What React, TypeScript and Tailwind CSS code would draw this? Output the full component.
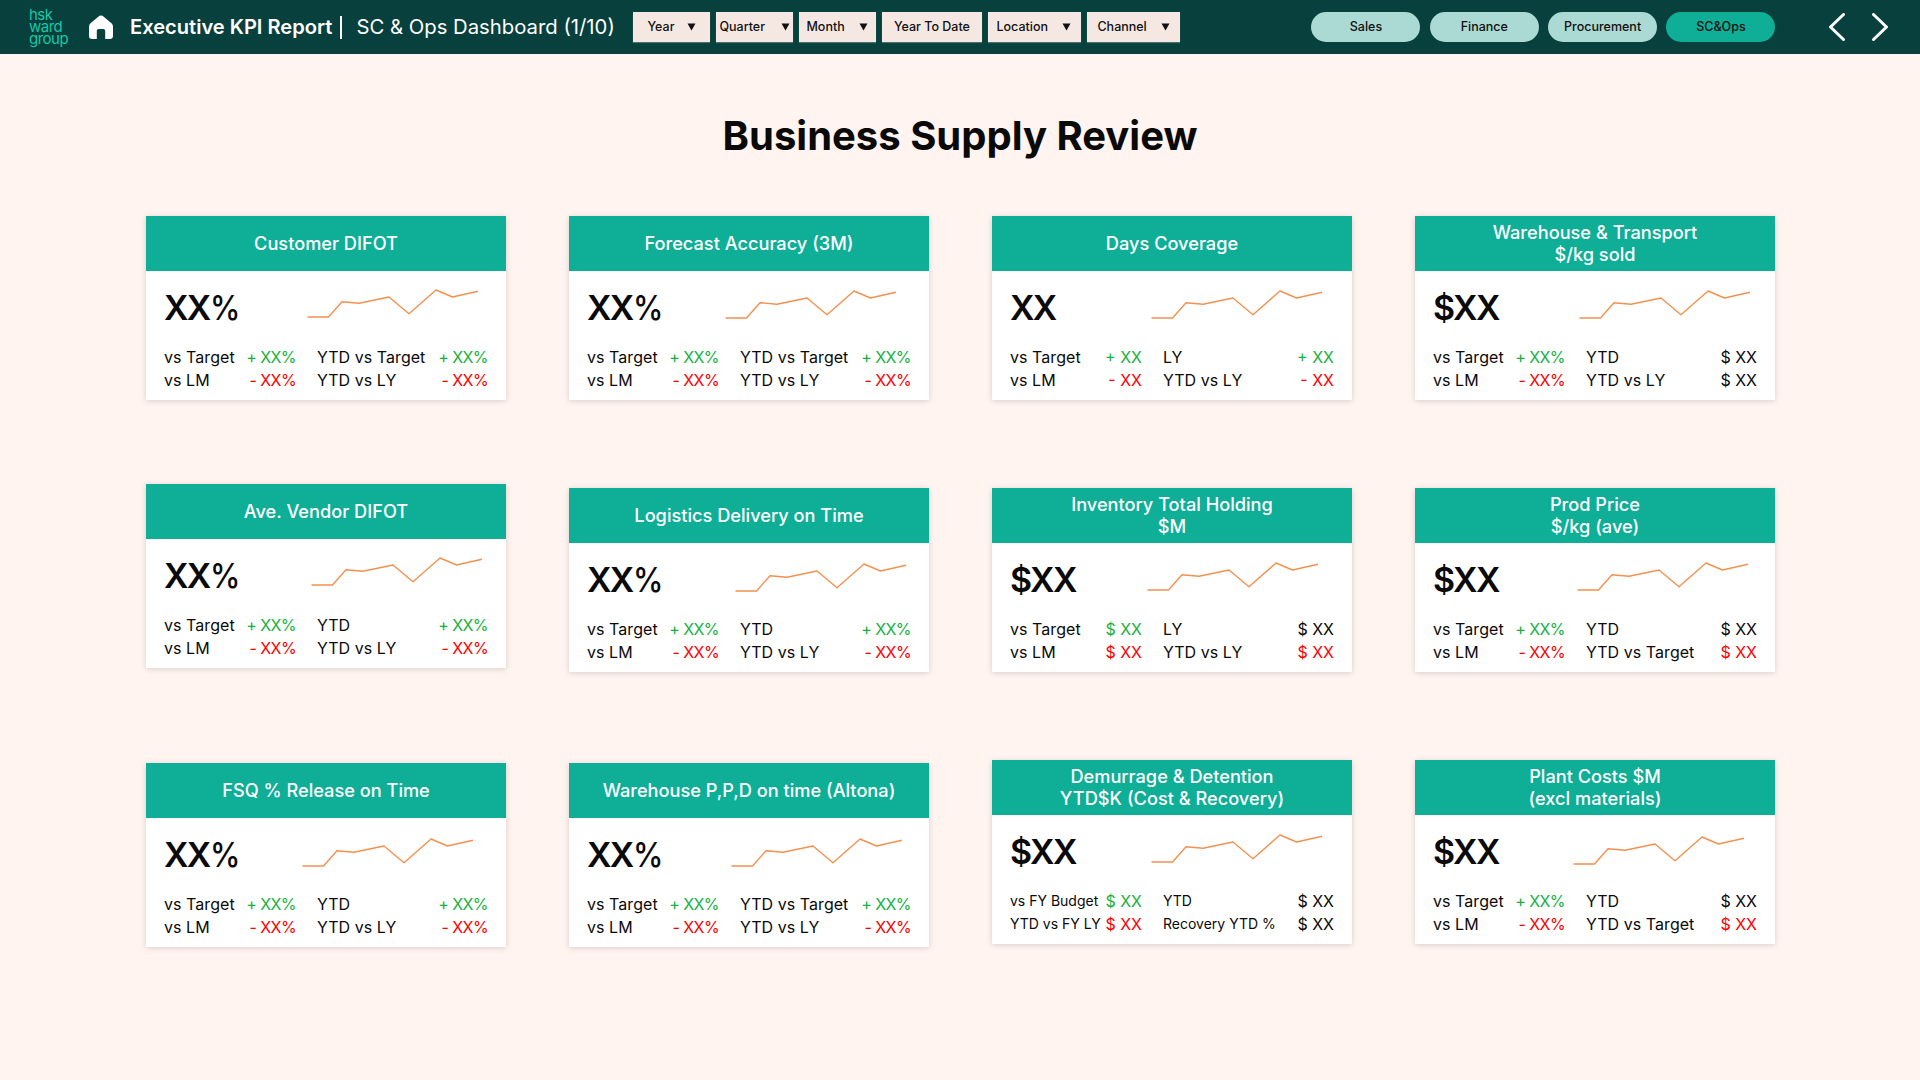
import React from "react";

type Stat = { l: string; v: string; c?: "g" | "r"; small?: boolean };
type Card = {
  title: string[];
  big: string;
  mt: string;
  spark: string;
  left: Stat[];
  right: Stat[];
};

const colour = { g: "text-[#16b23f]", r: "text-[#ff0000]" };

const pct = (a: string, b: string, c: string = "+ XX%", d: string = "- XX%") => [
  { l: a, v: c, c: "g" as const },
  { l: b, v: d, c: "r" as const },
];

const columns: Card[][] = [
  [
    { title: ["Customer DIFOT"], big: "XX%", mt: "mt-0", spark: "ml-[11px] mt-[18px]", left: pct("vs Target", "vs LM"), right: pct("YTD vs Target", "YTD vs LY") },
    { title: ["Ave. Vendor DIFOT"], big: "XX%", mt: "mt-[84px]", spark: "ml-[15px] mt-[18px]", left: pct("vs Target", "vs LM"), right: pct("YTD", "YTD vs LY") },
    { title: ["FSQ % Release on Time"], big: "XX%", mt: "mt-[95px]", spark: "ml-[6px] mt-[20px]", left: pct("vs Target", "vs LM"), right: pct("YTD", "YTD vs LY") },
  ],
  [
    { title: ["Forecast Accuracy (3M)"], big: "XX%", mt: "mt-0", spark: "ml-[6px] mt-[19px]", left: pct("vs Target", "vs LM"), right: pct("YTD vs Target", "YTD vs LY") },
    { title: ["Logistics Delivery on Time"], big: "XX%", mt: "mt-[88px]", spark: "ml-[16px] mt-[20px]", left: pct("vs Target", "vs LM"), right: pct("YTD", "YTD vs LY") },
    { title: ["Warehouse P,P,D on time (Altona)"], big: "XX%", mt: "mt-[91px]", spark: "ml-[12px] mt-[20px]", left: pct("vs Target", "vs LM"), right: pct("YTD vs Target", "YTD vs LY") },
  ],
  [
    { title: ["Days Coverage"], big: "XX", mt: "mt-0", spark: "ml-[9px] mt-[19px]", left: pct("vs Target", "vs LM", "+ XX", "- XX"), right: pct("LY", "YTD vs LY", "+ XX", "- XX") },
    { title: ["Inventory Total Holding", "$M"], big: "$XX", mt: "mt-[88px]", spark: "ml-[5px] mt-[19px]", left: pct("vs Target", "vs LM", "$ XX", "$ XX"), right: [{ l: "LY", v: "$ XX" }, { l: "YTD vs LY", v: "$ XX", c: "r" }] },
    {
      title: ["Demurrage & Detention", "YTD$K (Cost & Recovery)"],
      big: "$XX",
      mt: "mt-[88px]",
      spark: "ml-[9px] mt-[19px]",
      left: [{ l: "vs FY Budget", v: "$ XX", c: "g", small: true }, { l: "YTD vs FY LY", v: "$ XX", c: "r", small: true }],
      right: [{ l: "YTD", v: "$ XX", small: true }, { l: "Recovery YTD %", v: "$ XX", small: true }],
    },
  ],
  [
    { title: ["Warehouse & Transport", "$/kg sold"], big: "$XX", mt: "mt-0", spark: "ml-[14px] mt-[19px]", left: pct("vs Target", "vs LM"), right: [{ l: "YTD", v: "$ XX" }, { l: "YTD vs LY", v: "$ XX" }] },
    { title: ["Prod Price", "$/kg (ave)"], big: "$XX", mt: "mt-[88px]", spark: "ml-[12px] mt-[19px]", left: pct("vs Target", "vs LM"), right: [{ l: "YTD", v: "$ XX" }, { l: "YTD vs Target", v: "$ XX", c: "r" }] },
    { title: ["Plant Costs $M", "(excl materials)"], big: "$XX", mt: "mt-[88px]", spark: "ml-[8px] mt-[21px]", left: pct("vs Target", "vs LM"), right: [{ l: "YTD", v: "$ XX" }, { l: "YTD vs Target", v: "$ XX", c: "r" }] },
  ],
];

function Spark({ className }: { className: string }) {
  return (
    <svg width="172" height="30" viewBox="0 0 172 30" fill="none" className={className}>
      <polyline
        points="0.5,28 21.5,28 35,12.7 52,14.3 82,8 102,24.7 129,1 145.5,8 171,2.3"
        stroke="#f4914f"
        strokeWidth="1.4"
        strokeLinejoin="round"
      />
    </svg>
  );
}

function StatBlock({ rows, width }: { rows: Stat[]; width: string }) {
  return (
    <div className={width}>
      {rows.map((r) => (
        <div key={r.l} className="flex h-[23px] items-center justify-between whitespace-nowrap text-[#0a0a0a]">
          <span className={r.small ? "text-[14px]" : "text-[16px] tracking-[0.05px]"}>{r.l}</span>
          <span className={`text-[16px] ${r.v.includes("%") ? "tracking-[-0.6px]" : ""} ${r.c ? colour[r.c] : ""}`}>{r.v}</span>
        </div>
      ))}
    </div>
  );
}

function KpiCard({ card }: { card: Card }) {
  const hasPct = card.big.endsWith("%");
  return (
    <div className={`h-[184px] w-[360px] bg-white shadow-[0_1px_6px_rgba(0,0,0,0.16)] ${card.mt}`}>
      <div className="flex h-[55px] flex-col items-center justify-center bg-[#0fae97] pb-[1px] text-center text-[18.2px] leading-[22px] font-medium text-white">
        {card.title.map((t) => (
          <div key={t}>{t}</div>
        ))}
      </div>
      <div className="px-[18px]">
        <div className="flex h-[74px] items-start">
          <div className="mt-[15px] w-[132px] text-[34px] leading-[44px] font-semibold tracking-[-1.6px] text-[#0a0a0a]">
            {hasPct ? card.big.slice(0, -1) : card.big}
            {hasPct && <span className="inline-block origin-left scale-x-[0.9] font-medium">%</span>}
          </div>
          <Spark className={card.spark} />
        </div>
        <div className="flex gap-[21px]">
          <StatBlock rows={card.left} width="w-[132px]" />
          <StatBlock rows={card.right} width="w-[171px]" />
        </div>
      </div>
    </div>
  );
}

function Filter({ label, arrow = true, pad, w }: { label: string; arrow?: boolean; pad: string; w: string }) {
  return (
    <div className={`flex h-[30px] items-center justify-between bg-[#f5e8e3] text-[12.5px] font-medium text-[#111111] shadow-[0_1px_1px_rgba(255,255,255,0.25)] ${pad} ${w} ${arrow ? "" : "justify-center"}`}>
      <span>{label}</span>
      {arrow && (
        <svg width="9" height="8" viewBox="0 0 9 8">
          <polygon points="0.5,0.5 8.5,0.5 4.5,7.5" fill="#111111" />
        </svg>
      )}
    </div>
  );
}

function Pill({ label, active }: { label: string; active?: boolean }) {
  return (
    <div className={`flex h-[30px] w-[109px] items-center justify-center rounded-full text-[12.5px] font-medium text-[#111111] ${active ? "bg-[#0fae97]" : "bg-[#abd9d4]"}`}>
      {label}
    </div>
  );
}

export default function App() {
  return (
    <div className="min-h-[1080px] w-[1920px] bg-[#fff4ef] font-['Inter',sans-serif]">
      <header className="flex h-[54px] items-center bg-[#07403c] text-white">
        <div className="ml-[29px] w-[40px] text-[15px] leading-[12px] tracking-[-0.5px] text-[#13c9a8]">
          <div>hsk</div>
          <div>ward</div>
          <div>group</div>
        </div>
        <svg width="24" height="24" viewBox="0 0 24 24" className="ml-[20px]">
          <path d="M12 0.5 C13 0.5 14 1 15 1.9 L22.2 8 C23.4 9 24 10.2 24 11.7 V21 C24 22.8 22.8 24 21 24 H16.2 V16 C16.2 14.8 15.4 14 14.2 14 H9.8 C8.6 14 7.8 14.8 7.8 16 V24 H3 C1.2 24 0 22.8 0 21 V11.7 C0 10.2 0.6 9 1.8 8 L9 1.9 C10 1 11 0.5 12 0.5 Z" fill="#ffffff" />
        </svg>
        <div className="ml-[17px] text-[20.1px] font-semibold whitespace-nowrap">Executive KPI Report</div>
        <div className="ml-[8px] h-[23px] w-[2px] bg-white" />
        <div className="ml-[14px] w-[277px] text-[20.3px] whitespace-nowrap">SC &amp; Ops Dashboard (1/10)</div>
        <div className="flex gap-[6px]">
          <Filter label="Year" w="w-[77px]" pad="pl-[14px] pr-[14px]" />
          <Filter label="Quarter" w="w-[77px]" pad="pl-[3px] pr-[3px]" />
          <Filter label="Month" w="w-[77px]" pad="pl-[7px] pr-[8px]" />
          <Filter label="Year To Date" arrow={false} w="w-[100px]" pad="pl-[10px] pr-[11px]" />
          <Filter label="Location" w="w-[93px]" pad="pl-[8px] pr-[10px]" />
          <Filter label="Channel" w="w-[93px]" pad="pl-[10px] pr-[10px]" />
        </div>
        <div className="ml-[131px] flex gap-[9.33px]">
          <Pill label="Sales" />
          <Pill label="Finance" />
          <Pill label="Procurement" />
          <Pill label="SC&Ops" active />
        </div>
        <svg width="18" height="28" viewBox="0 0 18 28" fill="none" className="ml-[53px]">
          <path d="M15.5 1.5 L2.5 14 L15.5 26.5" stroke="#ffffff" strokeWidth="3" strokeLinecap="round" strokeLinejoin="round" />
        </svg>
        <svg width="18" height="28" viewBox="0 0 18 28" fill="none" className="ml-[25px]">
          <path d="M2.5 1.5 L15.5 14 L2.5 26.5" stroke="#ffffff" strokeWidth="3" strokeLinecap="round" strokeLinejoin="round" />
        </svg>
      </header>

      <h1 className="mt-[57px] text-center text-[40px] leading-[50px] font-bold text-[#0a0a0a]">Business Supply Review</h1>

      <main className="mt-[55px] ml-[146px] flex gap-[63px]">
        {columns.map((col, i) => (
          <div key={i} className="flex w-[360px] flex-col">
            {col.map((c) => (
              <KpiCard key={c.title[0]} card={c} />
            ))}
          </div>
        ))}
      </main>
    </div>
  );
}
